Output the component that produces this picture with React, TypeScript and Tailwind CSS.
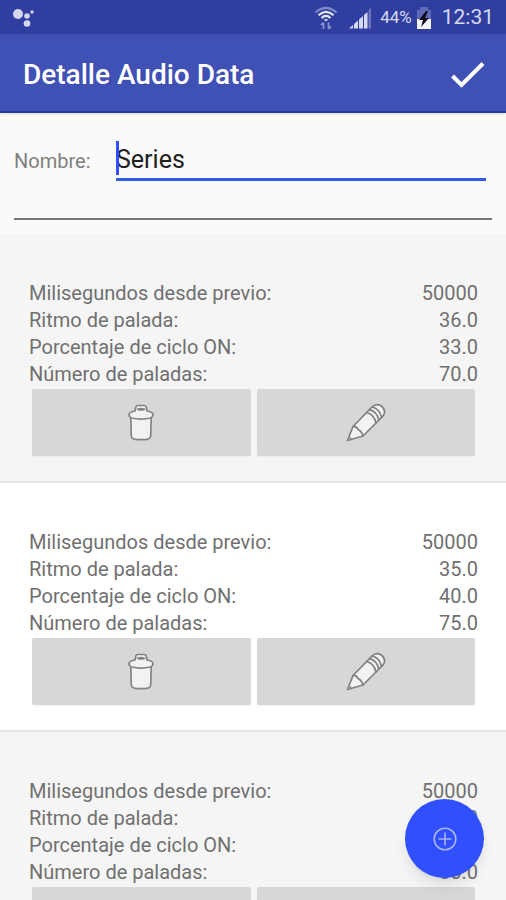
import { useState } from 'react';

interface AudioData {
  id: number;
  milisegundos: string;
  ritmo: string;
  porcentaje: string;
  paladas: string;
}

const initialItems: AudioData[] = [
  { id: 1, milisegundos: '50000', ritmo: '36.0', porcentaje: '33.0', paladas: '70.0' },
  { id: 2, milisegundos: '50000', ritmo: '35.0', porcentaje: '40.0', paladas: '75.0' },
  { id: 3, milisegundos: '50000', ritmo: '34.0', porcentaje: '45.0', paladas: '80.0' },
];

function AssistantIcon() {
  return (
    <svg width="24" height="24" viewBox="0 0 24 24" fill="#d3d7f0">
      <circle cx="6" cy="8" r="5" />
      <circle cx="15" cy="10" r="2.8" />
      <circle cx="20" cy="6" r="1.7" />
      <circle cx="15" cy="17.500" r="3.300" />
    </svg>
  );
}

function WifiIcon() {
  return (
    <svg width="24" height="24" viewBox="0 0 24 24" fill="none" strokeLinecap="butt">
      <path d="M1.500 6.500Q12-2.500 22.500 6.500" stroke="#7f89c9" strokeWidth="2.200" />
      <path d="M4.500 9.200Q12 2.500 19.500 9.200" stroke="#e3e5f6" strokeWidth="2.200" />
      <path d="M7.500 12Q12 7.800 16.500 12" stroke="#e3e5f6" strokeWidth="2.200" />
      <path d="M9.800 13.300h4.400L12 15.500z" fill="#e3e5f6" />
      <path d="M9.500 23v-6M7 19.200l2.500-2.700M14.500 16.500v6M17 20.300l-2.500 2.700" stroke="#8b94cf" strokeWidth="1.700" />
    </svg>
  );
}

function SignalIcon() {
  return (
    <svg width="24" height="24" viewBox="0 0 24 24">
      <g fill="#d5d9f1">
        <path d="M1 22.500l4-3.500v3.500z" />
        <path d="M6 18l4-3.500v8H6z" />
        <path d="M11 13.500l4-3.500v12.500h-4z" />
        <path d="M16 9l3.500-3v16.500H16z" />
      </g>
      <path d="M20.500 4.500l2.500-3v21h-2.500z" fill="#6a75bd" />
    </svg>
  );
}

function BatteryIcon() {
  return (
    <svg width="16" height="24" viewBox="0 0 16 24">
      <path d="M4 1h8v3h3v9H1V4h3z" fill="#5f6bb8" />
      <path d="M1 13h14v10H1z" fill="#f4f5fc" />
      <path d="M10 5L3 14h4l-2 7 8-9H9l3-7z" fill="#0b0c18" />
    </svg>
  );
}

function CheckIcon() {
  return (
    <svg width="36" height="28" viewBox="0 0 36 28" fill="none">
      <path d="M2.500 15l9 9L33 2.500" stroke="#ffffff" strokeWidth="4" />
    </svg>
  );
}

function TrashIcon() {
  return (
    <svg width="28" height="38" viewBox="0 0 28 38" fill="#f1f2f2" stroke="#848484" strokeWidth="1.700" strokeLinejoin="round">
      <path d="M3.800 13L4.300 32q.3 2.800 3.800 3.300 6 .8 12 0 3.300-.5 3.600-3.300l.5-19z" />
      <path d="M8 7l.8-4q.4-1.500 2.200-1.500h6q1.800 0 2.200 1.500L20 7q5.300.8 6 3.200.4 2.600-2.500 3.800-9.500 2.200-19 0Q1.600 12.800 2 10.200 2.700 7.800 8 7z" />
      <path d="M10.500 5.200q3.500-1 7 0-3.500 1.600-7 0z" fill="#a5a5a5" />
    </svg>
  );
}

function PencilIcon() {
  return (
    <svg width="40" height="40" viewBox="0 0 40 40" fill="#f1f2f2" stroke="#808080" strokeWidth="1.700" strokeLinejoin="round" strokeLinecap="round">
      <path d="M1.500 37.500L7 23.500 26 4q4-4 8.500-1.500 5 3.500 3.800 8Q37.500 13 35.500 14.500L17 33z" />
      <path d="M7 23.500q3.500-.5 5 3 3.500 1.500 5 6.500" fill="none" />
      <path d="M20.500 9.500q7.500 1.500 9.500 10.500M23.300 6.700q7.500 1.500 9.500 10.500M26 4q7.500 1.500 9.500 10.500" fill="none" />
      <path d="M1.500 37.500l1.700-4q2.200.5 2.700 2.300z" fill="#999999" stroke="none" />
    </svg>
  );
}

function AddIcon() {
  return (
    <svg width="26" height="26" viewBox="0 0 26 26" fill="none">
      <circle cx="13" cy="13" r="10.800" stroke="#a9b4f4" strokeWidth="1.600" />
      <path d="M13 6.500v13M6.500 13h13" stroke="#a9b4f4" strokeWidth="1.600" />
    </svg>
  );
}

function DataRow({ label, value }: { label: string; value: string }) {
  return (
    <div className="flex justify-between">
      <dt>{label}</dt>
      <dd>{value}</dd>
    </div>
  );
}

function AudioCard({ item, onDelete }: { item: AudioData; onDelete: (id: number) => void }) {
  return (
    <li className="border-b-2 border-[#e6e6e6] bg-[#f5f5f5] pt-[46px] pr-7 pb-[25px] pl-[29px] even:bg-white">
      <dl className="text-xl leading-[27px] text-[#707070]">
        <DataRow label="Milisegundos desde previo:" value={item.milisegundos} />
        <DataRow label="Ritmo de palada:" value={item.ritmo} />
        <DataRow label="Porcentaje de ciclo ON:" value={item.porcentaje} />
        <DataRow label="Número de paladas:" value={item.paladas} />
      </dl>
      <div className="mt-px flex gap-1.5 px-[3px]">
        <button
          type="button"
          aria-label="Eliminar"
          onClick={() => onDelete(item.id)}
          className="flex h-[67px] flex-1 items-center justify-center rounded-xs bg-[#d6d8d7] shadow-xs"
        >
          <TrashIcon />
        </button>
        <button
          type="button"
          aria-label="Editar"
          className="flex h-[67px] flex-1 items-center justify-center rounded-xs bg-[#d6d8d7] shadow-xs"
        >
          <PencilIcon />
        </button>
      </div>
    </li>
  );
}

export default function App() {
  const [nombre, setNombre] = useState('Series');
  const [items, setItems] = useState<AudioData[]>(initialItems);

  const handleDelete = (id: number) => {
    setItems(items.filter((item) => item.id !== id));
  };

  return (
    <div className="relative flex h-screen flex-col overflow-hidden bg-[#fafafa] font-[Roboto,sans-serif]">
      {/* status bar */}
      <div className="flex h-[34px] shrink-0 items-center justify-between bg-[#303f9f] px-3 pt-0.5 text-[#d5d9f1]">
        <AssistantIcon />
        <div className="flex items-center">
          <WifiIcon />
          <span className="ml-2.5">
            <SignalIcon />
          </span>
          <span className="ml-2 text-[17px]">44%</span>
          <span className="ml-1">
            <BatteryIcon />
          </span>
          <span className="ml-2.5 text-[21px]">12:31</span>
        </div>
      </div>

      <header className="z-10 flex h-[79px] shrink-0 items-center justify-between border-b-2 border-[#2537a0] bg-[#3f51b5] pt-1 pr-5 pl-[23px] shadow-sm">
        <h1 className="text-[28px] font-medium text-white">Detalle Audio Data</h1>
        <button type="button" aria-label="Guardar">
          <CheckIcon />
        </button>
      </header>

      <div className="shrink-0 px-3.5 pt-7 pb-3.5">
        <div className="flex items-center pr-1.5">
          <label htmlFor="nombre" className="w-[102px] text-xl text-[#808080]">
            Nombre:
          </label>
          <div className="relative flex-1">
            <input
              id="nombre"
              type="text"
              value={nombre}
              onChange={(e) => setNombre(e.target.value)}
              className="block h-10 w-full border-b-3 border-[#2f5be6] bg-transparent text-[25px] text-[#212121] caret-transparent outline-none"
            />
            {/* text cursor */}
            <span className="absolute top-0 left-0 h-[34px] w-[3px] bg-[#304ffe]" />
          </div>
        </div>
        <hr className="mt-[37px] border-t-2 border-[#757575]" />
      </div>

      <ul className="min-h-0 flex-1 overflow-y-auto [scrollbar-width:none]">
        {items.map((item) => (
          <AudioCard key={item.id} item={item} onDelete={handleDelete} />
        ))}
      </ul>

      <button
        type="button"
        aria-label="Añadir"
        className="absolute right-[22px] bottom-[22px] flex size-[79px] items-center justify-center rounded-full bg-[#304ffe] shadow-lg"
      >
        <AddIcon />
      </button>
    </div>
  );
}
